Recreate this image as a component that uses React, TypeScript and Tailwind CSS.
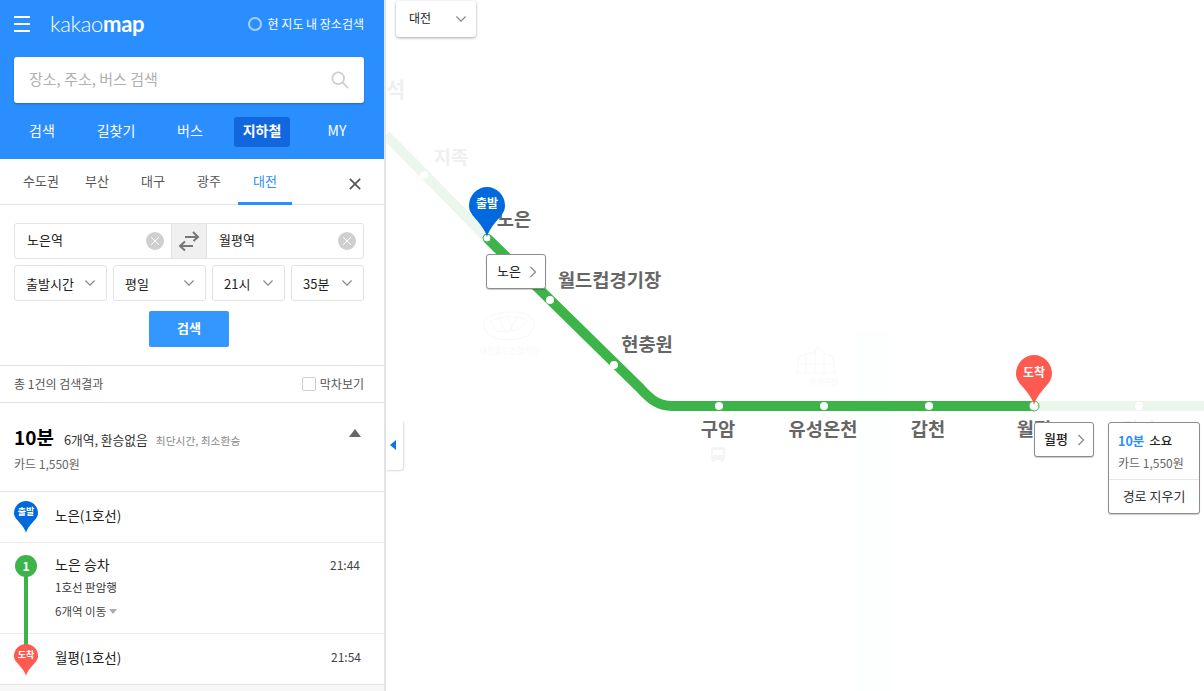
import React from "react";

const FONT = { fontFamily: '"Noto Sans CJK KR", "Noto Sans", sans-serif' };

function Pin({ color, label, w, h, textClass }: { color: string; label: string; w: number; h: number; textClass: string }) {
  return (
    <div className="relative" style={{ width: w, height: h }}>
      <svg width={w} height={h} viewBox="0 0 36 48" preserveAspectRatio="none" className="block">
        <path d="M18 48 C16.5 41 9 33 3.5 27 C1.2 24 0 21.5 0 18 A18 18 0 0 1 36 18 C36 21.5 34.8 24 32.5 27 C27 33 19.5 41 18 48Z" fill={color} />
      </svg>
      <span className={`absolute left-0 right-0 text-center text-white font-bold ${textClass}`}>{label}</span>
    </div>
  );
}

function Chevron({ size = 10, color = "#8a8a8a" }: { size?: number; color?: string }) {
  return (
    <svg width={size} height={size} viewBox="0 0 12 12" className="block shrink-0">
      <path d="M0.5 3 L6 8.5 L11.5 3" fill="none" stroke={color} strokeWidth="1.5" />
    </svg>
  );
}

function ChevronRight() {
  return (
    <svg width="8" height="12" viewBox="0 0 8 12" className="block shrink-0">
      <path d="M1.5 1 L6.5 6 L1.5 11" fill="none" stroke="#8a8a8a" strokeWidth="1.3" />
    </svg>
  );
}

function ClearBtn() {
  return (
    <div className="w-[18px] h-[18px] rounded-full bg-[#cfcfcf] flex items-center justify-center shrink-0">
      <svg width="10" height="10" viewBox="0 0 10 10">
        <path d="M1 1 L9 9 M9 1 L1 9" stroke="#fff" strokeWidth="1" />
      </svg>
    </div>
  );
}

function SelectBox({ label, className }: { label: string; className: string }) {
  return (
    <div className={`h-[36px] border border-[#e3e3e3] rounded-[3px] flex items-center justify-between pl-[11px] pr-[11px] text-[13px] text-[#222] ${className}`}>
      <span className="leading-none whitespace-nowrap">{label}</span>
      <Chevron />
    </div>
  );
}

function Label({ x, y, text, faded, size = 18.7 }: { x: number; y: number; text: string; faded?: boolean; size?: number }) {
  return (
    <text x={x} y={y} textAnchor="middle" fontSize={size} fontWeight={700} fill={faded ? "#efefef" : "#666666"} style={FONT}>
      {text}
    </text>
  );
}

function MapCanvas() {
  const faded = "#ebf6ec";
  const green = "#3cb44a";
  const ghost = "#f8f8f8";
  return (
    <svg width="818" height="691" viewBox="386 0 818 691" className="absolute left-0 top-0 block">
      <path d="M872 330 L874 691" fill="none" stroke="#fdfefe" strokeWidth="34" />
      <path d="M386 135 L487 238" stroke={faded} strokeWidth="10" fill="none" />
      <path d="M1034 406 L1204 406" stroke={faded} strokeWidth="10" fill="none" />
      <path d="M487 238 L640 388 C650 399 658 406 672 406 L1034 406" stroke={green} strokeWidth="10" fill="none" />
      <circle cx="424" cy="175" r="4" fill="#fff" />
      <circle cx="487" cy="238" r="4" fill="#fff" stroke={green} strokeWidth="1" />
      <circle cx="550" cy="300" r="4" fill="#fff" />
      <circle cx="614" cy="365" r="4" fill="#fff" />
      <circle cx="719" cy="406" r="4" fill="#fff" />
      <circle cx="824" cy="406" r="4" fill="#fff" />
      <circle cx="929" cy="406" r="4" fill="#fff" />
      <circle cx="1034" cy="406" r="5" fill="#fff" stroke={green} strokeWidth="1" />
      <circle cx="1139" cy="406" r="4" fill="#fff" />

      <Label x={386} y={97} text="반석" faded size={21} />
      <Label x={451} y={164} text="지족" faded />
      <Label x={514} y={226} text="노은" />
      <Label x={609.5} y={287} text="월드컵경기장" />
      <Label x={647} y={351} text="현충원" />
      <Label x={718} y={436} text="구암" />
      <Label x={823} y={436} text="유성온천" />
      <Label x={928} y={436} text="갑천" />
      <Label x={1034} y={436} text="월평" />
      <Label x={1139} y={436} text="갈마" faded />

      {/* stadium */}
      <g fill="none" stroke={ghost} strokeWidth="1">
        <path d="M484 322 C488 314 500 312 514 312 C524 312 532 316 534 322 C535 330 530 335 522 338 C512 341 498 340 490 336 C485 332 483 327 484 322Z" />
        <path d="M490 322 C498 316 520 315 528 321 L518 330 L498 332Z" />
        <path d="M498 316 L505 331 M508 315 L512 331 M518 315 L510 330" />
      </g>
      <text x="509" y="354" textAnchor="middle" fontSize="8" fill={ghost} style={FONT}>대전월드컵경기장</text>
      {/* hall */}
      <g fill="none" stroke={ghost} strokeWidth="1">
        <path d="M797 373 L799 356 L815 352 L818 346 L822 352 L833 357 L835 373Z" />
        <path d="M806 354 L806 373 M815 352 L815 373 M824 354 L824 373 M798 364 L835 364" />
      </g>
      <text x="824" y="385" textAnchor="middle" fontSize="8" fill={ghost} style={FONT}>유성온천</text>
      {/* bus */}
      <g fill="#f4f4f4">
        <rect x="711" y="447" width="14" height="13" rx="2.5" />
        <rect x="713" y="450" width="10" height="5" fill="#fff" />
        <rect x="712" y="460" width="3" height="2" />
        <rect x="721" y="460" width="3" height="2" />
      </g>
    </svg>
  );
}

export default function App() {
  return (
    <div className="w-[1204px] h-[691px] flex overflow-hidden bg-white relative" style={FONT}>
      {/* left panel */}
      <div className="w-[386px] h-full shrink-0 border-r-2 border-[#e4e4e4] bg-[#f7f7f7] flex flex-col relative z-10">
        <div className="h-[159px] bg-[#2a8eff] shrink-0 flex flex-col">
          <div className="h-[57px] flex items-center pl-[14px] pr-[20px] pb-[9px]">
            <div className="flex flex-col gap-[5px] w-[16px]">
              <div className="h-[2px] bg-white" />
              <div className="h-[2px] bg-white" />
              <div className="h-[2px] bg-white" />
            </div>
            <div className="ml-[20px] text-white text-[22px] leading-none tracking-[-0.3px]" style={{ fontFamily: '"Lato", sans-serif' }}>
              <span className="font-light">kakao</span>
              <span className="font-bold">map</span>
            </div>
            <div className="ml-auto flex items-center gap-[6px]">
              <div className="w-[14px] h-[14px] rounded-full border-2 border-[#a6cfff]" />
              <span className="text-white text-[12px] leading-none">현 지도 내 장소검색</span>
            </div>
          </div>
          <div className="ml-[14px] mr-[20px] h-[46px] bg-white rounded-[3px] shadow-[0_1px_2px_rgba(0,0,0,0.25)] flex items-center justify-between pl-[15px] pr-[15px] shrink-0">
            <span className="text-[15px] text-[#b0b0b0] leading-none pb-[3px]">장소, 주소, 버스 검색</span>
            <svg width="18" height="18" viewBox="0 0 20 20">
              <circle cx="8" cy="8" r="6.5" fill="none" stroke="#cfcfcf" strokeWidth="2" />
              <path d="M13 13 L19 19" stroke="#cfcfcf" strokeWidth="2" />
            </svg>
          </div>
          <div className="flex items-center pl-[5px] mt-[14px] text-[14px] text-white">
            <div className="w-[74px] text-center pb-[3px]">검색</div>
            <div className="w-[74px] text-center pb-[3px]">길찾기</div>
            <div className="w-[74px] text-center pb-[3px]">버스</div>
            <div className="ml-[7px] w-[56px] h-[30px] bg-[#1266de] rounded-[3px] flex items-center justify-center font-bold pb-[3px]">지하철</div>
            <div className="ml-[10px] w-[74px] text-center pb-[3px]">MY</div>
          </div>
        </div>

        <div className="bg-white flex-1 flex flex-col">
          <div className="h-[46px] border-b border-[#e2e2e2] flex pl-[14px] gap-[2px] relative shrink-0 text-[13px] text-[#555]">
            <div className="w-[54px] text-center pt-[12px]">수도권</div>
            <div className="w-[54px] text-center pt-[12px]">부산</div>
            <div className="w-[54px] text-center pt-[12px]">대구</div>
            <div className="w-[54px] text-center pt-[12px]">광주</div>
            <div className="w-[54px] h-[46px] text-center pt-[12px] text-[#2a8eff] border-b-[3px] border-[#2a8eff]">대전</div>
            <svg width="12" height="12" viewBox="0 0 14 14" className="absolute left-[349px] top-[19px]">
              <path d="M1 1 L13 13 M13 1 L1 13" stroke="#555" strokeWidth="2" />
            </svg>
          </div>

          <div className="h-[161px] pl-[14px] pr-[20px] pt-[18px] border-b border-[#e2e2e2] shrink-0 flex flex-col">
            <div className="h-[36px] border border-[#e3e3e3] rounded-[3px] flex items-stretch text-[13px] text-[#222]">
              <div className="w-[156px] flex items-center justify-between pl-[12px] pr-[7px]">
                <span className="pb-[2px]">노은역</span>
                <ClearBtn />
              </div>
              <div className="w-[36px] bg-[#f0f0f0] border-x border-[#e3e3e3] flex items-center justify-center">
                <svg width="22" height="22" viewBox="0 0 22 22">
                  <path d="M7 7 H20 M15 2 L20 7 L15.5 11" fill="none" stroke="#777" strokeWidth="2" />
                  <path d="M15 16 H2 M7 11.5 L2 16 L7 20.5" fill="none" stroke="#777" strokeWidth="2" />
                </svg>
              </div>
              <div className="flex-1 flex items-center justify-between pl-[12px] pr-[7px]">
                <span className="pb-[2px]">월평역</span>
                <ClearBtn />
              </div>
            </div>
            <div className="flex gap-[6px] mt-[6px]">
              <SelectBox label="출발시간" className="w-[93px]" />
              <SelectBox label="평일" className="w-[93px]" />
              <SelectBox label="21시" className="w-[73px]" />
              <SelectBox label="35분" className="w-[73px]" />
            </div>
            <div className="mt-[10px] mx-auto w-[80px] h-[36px] bg-[#3397ff] rounded-[2px] text-white text-[13px] font-bold flex items-center justify-center pb-[2px]">검색</div>
          </div>

          <div className="h-[37px] border-b border-[#e2e2e2] flex items-center justify-between pl-[14px] pr-[20px] shrink-0 text-[12px] text-[#555]">
            <span>총 1건의 검색결과</span>
            <div className="flex items-center gap-[4px]">
              <div className="w-[14px] h-[14px] border border-[#cfcfcf] rounded-[2px] bg-white" />
              <span>막차보기</span>
            </div>
          </div>

          <div className="h-[89px] border-b border-[#e2e2e2] px-[14px] pt-[20px] shrink-0 relative">
            <div className="flex items-baseline">
              <span className="text-[19px] font-bold text-black leading-[28px]">10분</span>
              <span className="ml-[10px] text-[12.75px] text-[#333]">6개역, 환승없음</span>
              <span className="ml-[8px] text-[10.75px] text-[#888]">최단시간, 최소환승</span>
            </div>
            <div className="text-[12px] text-[#666] mt-[4px]">카드 1,550원</div>
            <svg width="12" height="8" viewBox="0 0 12 8" className="absolute left-[349px] top-[26px]">
              <path d="M6 0 L12 8 H0Z" fill="#666" />
            </svg>
          </div>

          <div className="h-[51px] border-b border-[#ececec] flex items-center pl-[14px] shrink-0">
            <Pin color="#0069de" label="출발" w={24} h={32} textClass="top-[4px] text-[9px] leading-[14px]" />
            <span className="ml-[17px] text-[13.5px] text-[#222] mb-[4px]">노은(1호선)</span>
          </div>

          <div className="h-[91px] border-b border-[#ececec] flex pl-[15px] pr-[24px] shrink-0 relative">
            <div className="w-[22px] h-[22px] mt-[12px] rounded-full bg-[#3cb44a] text-white text-[12px] font-bold flex items-center justify-center">1</div>
            <div className="ml-[18px] mt-[11px] flex-1">
              <div className="text-[14px] text-[#222] leading-[20px]">노은 승차</div>
              <div className="text-[11.5px] text-[#333] leading-[16px] mt-[5px]">1호선 판암행</div>
              <div className="text-[11.5px] text-[#444] leading-[16px] mt-[8px] flex items-center gap-[3px]">
                6개역 이동
                <svg width="8" height="5" viewBox="0 0 8 5"><path d="M0 0 H8 L4 5Z" fill="#aaa" /></svg>
              </div>
            </div>
            <div className="text-[12px] text-[#444] mt-[13px]">21:44</div>
            <div className="absolute left-[24px] top-[32px] w-[4px] h-[72px] bg-[#3cb44a] z-10" />
          </div>

          <div className="h-[51px] border-b border-[#e2e2e2] flex items-center pl-[14px] pr-[23px] shrink-0">
            <div className="relative z-20 mt-[2px]">
              <Pin color="#ff5a4f" label="도착" w={24} h={32} textClass="top-[4px] text-[9px] leading-[14px]" />
            </div>
            <span className="ml-[17px] text-[13.5px] text-[#222] mb-[4px]">월평(1호선)</span>
            <span className="ml-auto text-[12px] text-[#444] mb-[4px]">21:54</span>
          </div>
          <div className="flex-1 bg-[#f7f7f7]" />
        </div>

        {/* collapse handle */}
        <div className="absolute left-[386px] top-[420px] w-[17px] h-[50px] bg-white rounded-r-[3px] shadow-[1px_1px_2px_rgba(0,0,0,0.15)] flex items-center justify-center pr-[4px]">
          <svg width="6" height="10" viewBox="0 0 6 10"><path d="M6 0 V10 L0 5Z" fill="#0b75e6" /></svg>
        </div>
      </div>

      {/* map */}
      <div className="flex-1 relative overflow-hidden bg-white">
        <MapCanvas />

        <div className="absolute left-[10px] top-[1px] w-[80px] h-[36px] bg-white rounded-[3px] shadow-[0_1px_3px_rgba(0,0,0,0.35)] flex items-center justify-between pl-[13px] pr-[10px] text-[12px] text-[#222]">
          <span className="pb-[2px]">대전</span>
          <Chevron />
        </div>

        <div className="absolute left-[83px] top-[187px]">
          <Pin color="#0069de" label="출발" w={36} h={50} textClass="top-[7px] text-[12px] leading-[18px]" />
        </div>
        <div className="absolute left-[630px] top-[355px]">
          <Pin color="#ff5a4f" label="도착" w={36} h={50} textClass="top-[8px] text-[12px] leading-[18px]" />
        </div>

        <div className="absolute left-[100px] top-[254px] w-[60px] h-[35px] bg-white border border-[#8c8c8c] rounded-[3px] shadow-[0_1px_1px_rgba(0,0,0,0.2)] flex items-center justify-between pl-[10px] pr-[8px] text-[13px] text-[#222]">
          <span className="pb-[2px]">노은</span>
          <ChevronRight />
        </div>
        <div className="absolute left-[648px] top-[422px] w-[60px] h-[35px] bg-white border border-[#8c8c8c] rounded-[3px] shadow-[0_1px_1px_rgba(0,0,0,0.2)] flex items-center justify-between pl-[9px] pr-[8px] text-[13px] font-medium text-[#222]">
          <span className="pb-[1px]">월평</span>
          <ChevronRight />
        </div>

        <div className="absolute left-[722px] top-[422px] w-[92px] h-[92px] bg-white border border-[#8c8c8c] rounded-[3px] shadow-[0_1px_1px_rgba(0,0,0,0.2)] flex flex-col">
          <div className="h-[57px] border-b border-[#e6e6e6] pl-[9px] pt-[9px] shrink-0">
            <div className="text-[12.5px] leading-[18px] font-medium text-[#222]"><span className="text-[#2a8eff] font-bold">10분</span><span className="ml-[5px]">소요</span></div>
            <div className="text-[12px] leading-[18px] text-[#666] mt-[4px]">카드 1,550원</div>
          </div>
          <div className="flex-1 flex items-center justify-center text-[13px] text-[#333]"><span className="pb-[2px]">경로 지우기</span></div>
        </div>
      </div>
    </div>
  );
}
